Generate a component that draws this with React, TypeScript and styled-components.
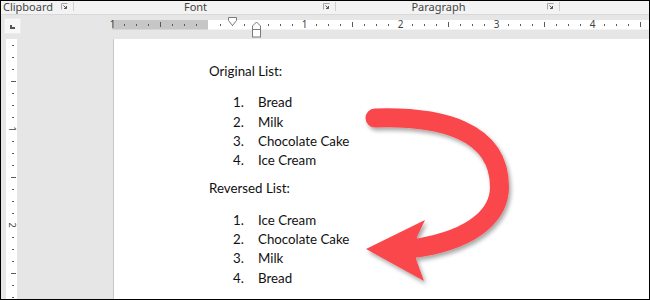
import React from 'react';
import styled, { createGlobalStyle } from 'styled-components';

const TICK = 12;

const originalList = ['Bread', 'Milk', 'Chocolate Cake', 'Ice Cream'];
const reversedList = [...originalList].reverse();

const ribbonGroups = [
	{ label: 'Clipboard', width: 73 },
	{ label: 'Font', width: 262 },
	{ label: 'Paragraph', width: 224 },
];

type Mark = React.ReactElement;

function LauncherIcon() {
	return (
		<svg width="7" height="7" viewBox="0 0 7 7">
			<path d="M0.5 6.5 V0.5 H6.5" fill="none" stroke="#a6a6a6" strokeWidth="1" />
			<path d="M2.5 2.5 L5.5 5.5 M5.5 3 V5.5 H3" fill="none" stroke="#555" strokeWidth="1" />
		</svg>
	);
}

// horizontal ruler, drawn in page coordinates shifted by the svg's left edge (110) and top (15)
function HorizontalRuler() {
	const marginX = 208;
	const marks: Mark[] = [];
	for (let k = -8; k <= 36; k++) {
		const x = marginX + k * TICK - 110;
		if (x < 0 || x > 539 || k === 0) continue;
		if (k % 8 === 0) {
			marks.push(
				<RulerNumber key={k} x={x + 0.5} y={13.3} textAnchor="middle">
					{Math.abs(k / 8)}
				</RulerNumber>,
			);
		} else if (Math.abs(k % 8) === 4) {
			marks.push(<rect key={k} x={x} y={7} width={1} height={5} fill="#5a5a5a" />);
		} else {
			marks.push(<rect key={k} x={x} y={9} width={1} height={2} fill="#5a5a5a" />);
		}
	}
	return (
		<HRulerSvg width="539" height="24" viewBox="0 0 539 24">
			<rect x={2} y={5} width={96} height={9.5} fill="#c6c6c6" />
			<rect x={98} y={5} width={441} height={9.5} fill="#ffffff" />
			{marks}
			<path
				d="M118.5 2.5 H126.5 V5.5 L122.5 10.5 L118.5 5.5 Z"
				fill="#fff"
				stroke="#7a7a7a"
				strokeWidth="1"
			/>
			<path
				d="M142.5 14.5 V11 L146.5 7 L150.5 11 V14.5 Z"
				fill="#fff"
				stroke="#7a7a7a"
				strokeWidth="1"
			/>
			<rect x={142.5} y={14.5} width={8} height={7.5} fill="#fff" stroke="#7a7a7a" strokeWidth="1" />
		</HRulerSvg>
	);
}

// vertical ruler: svg x = page x - 6, svg y = page y - 39
function VerticalRuler() {
	const marks: Mark[] = [];
	for (let k = 1; k <= 22; k++) {
		const y = 33 + k * TICK - 39;
		if (k % 8 === 0) {
			marks.push(
				<VRulerNumber
					key={k}
					x={0}
					y={0}
					textAnchor="middle"
					transform={`translate(6.5 ${y}) rotate(90) translate(0 3.2)`}
				>
					{k / 8}
				</VRulerNumber>,
			);
		} else if (k % 8 === 4) {
			marks.push(<rect key={k} x={5} y={y} width={5} height={1} fill="#5a5a5a" />);
		} else {
			marks.push(<rect key={k} x={6} y={y} width={2} height={1} fill="#5a5a5a" />);
		}
	}
	return (
		<VRulerSvg width="11" height="260" viewBox="0 0 11 260">
			{marks}
		</VRulerSvg>
	);
}

// arrow drawn in screen coordinates through the viewBox
function ReverseArrow() {
	return (
		<ArrowSvg viewBox="114 39 535 260" width="535" height="260">
			<defs>
				<filter id="arrowShadow" x="-20%" y="-20%" width="140%" height="140%">
					<feDropShadow dx="2" dy="3" stdDeviation="2" floodColor="#000" floodOpacity="0.35" />
				</filter>
			</defs>
			<g filter="url(#arrowShadow)" fill="#fa464b">
				<path
					d="M375 118 C440 116, 499.5 130, 499.5 187 C499.5 212, 478 238, 418 248"
					fill="none"
					stroke="#fa464b"
					strokeWidth="19"
					strokeLinecap="round"
				/>
				<path d="M366 249 L425 220 L417 237 L416 259 L424 281 Z" />
			</g>
		</ArrowSvg>
	);
}

function App() {
	return (
		<>
			<GlobalStyle />
			<Frame>
				<RibbonLabels>
					{ribbonGroups.map((g) => (
						<RibbonGroup key={g.label} $width={g.width}>
							<GroupLabel>{g.label}</GroupLabel>
							<Launcher>
								<LauncherIcon />
							</Launcher>
							<GroupSeparator />
						</RibbonGroup>
					))}
				</RibbonLabels>
				<RulerRow>
					<TabSelector>
						<TabMark />
					</TabSelector>
					<HorizontalRuler />
				</RulerRow>
				<Workspace>
					<SideGutter>
						<VRulerStrip>
							<VerticalRuler />
						</VRulerStrip>
					</SideGutter>
					<Page>
						<Heading $after={12}>Original List:</Heading>
						<NumberedList $after={9}>
							{originalList.map((item, i) => (
								<ListItem key={item}>
									<ItemNumber>{i + 1}.</ItemNumber>
									<span>{item}</span>
								</ListItem>
							))}
						</NumberedList>
						<Heading $after={12}>Reversed List:</Heading>
						<NumberedList>
							{reversedList.map((item, i) => (
								<ListItem key={item}>
									<ItemNumber>{i + 1}.</ItemNumber>
									<span>{item}</span>
								</ListItem>
							))}
						</NumberedList>
						<ReverseArrow />
					</Page>
				</Workspace>
			</Frame>
		</>
	);
}

export default App;

const GlobalStyle = createGlobalStyle`
	html, body {
		margin: 0;
		padding: 0;
		background: #fff;
	}
	body {
		width: 650px;
		height: 300px;
		overflow: hidden;
	}
`;

const Frame = styled.div`
	box-sizing: border-box;
	display: flex;
	flex-direction: column;
	width: 650px;
	height: 300px;
	border: 1px solid #000;
	background-color: #e6e6e6;
	overflow: hidden;
	font-family: 'Noto Sans', 'DejaVu Sans', sans-serif;
`;

const RibbonLabels = styled.div`
	display: flex;
	align-items: flex-start;
	height: 13px;
	flex-shrink: 0;
	background-color: #f3f3f3;
	border-bottom: 1px solid #d8d8d8;
`;

const RibbonGroup = styled.div<{ $width: number }>`
	display: flex;
	align-items: flex-start;
	width: ${(p) => p.$width}px;
	height: 13px;
	flex-shrink: 0;
`;

const GroupLabel = styled.div`
	flex: 1;
	text-align: center;
	font-size: 11px;
	line-height: 11px;
	color: #444;
	white-space: nowrap;
`;

const Launcher = styled.div`
	display: flex;
	justify-content: center;
	width: 18px;
	padding-top: 2px;
`;

const GroupSeparator = styled.div`
	width: 1px;
	height: 9px;
	margin-top: 1px;
	background-color: #d0d0d0;
`;

const RulerRow = styled.div`
	display: flex;
	align-items: flex-start;
	height: 24px;
	flex-shrink: 0;
`;

const TabSelector = styled.div`
	box-sizing: border-box;
	width: 17px;
	height: 16px;
	margin: 3px 0 0 3px;
	background-color: #f8f8f8;
	border: 1px solid #ececec;
`;

const TabMark = styled.div`
	box-sizing: border-box;
	width: 5px;
	height: 4px;
	margin: 6px 0 0 5px;
	border-left: 2px solid #555;
	border-bottom: 2px solid #555;
`;

const HRulerSvg = styled.svg`
	display: block;
	margin-left: auto;
`;

const RulerNumber = styled.text`
	font-family: 'Noto Sans', 'DejaVu Sans', sans-serif;
	font-size: 10px;
	fill: #444;
`;

const VRulerNumber = styled(RulerNumber)`
	font-size: 9px;
`;

const VRulerSvg = styled.svg`
	display: block;
	overflow: visible;
`;

const Workspace = styled.div`
	display: flex;
	flex: 1;
	min-height: 0;
`;

const SideGutter = styled.div`
	width: 112px;
	flex-shrink: 0;
`;

const VRulerStrip = styled.div`
	width: 11px;
	height: 100%;
	margin-left: 5px;
	background-color: #fff;
`;

const Page = styled.div`
	position: relative;
	flex: 1;
	padding: 23px 0 0 95px;
	background-color: #fff;
	border-left: 1px solid #c8c8c8;
	font-family: Lato, 'Liberation Sans', sans-serif;
	font-size: 13.3px;
	line-height: 19.3px;
	color: #111;
`;

const Heading = styled.div<{ $after?: number }>`
	margin-bottom: ${(p) => p.$after ?? 11}px;
`;

const NumberedList = styled.div<{ $after?: number }>`
	display: flex;
	flex-direction: column;
	padding-left: 24px;
	margin-bottom: ${(p) => p.$after ?? 0}px;
`;

const ListItem = styled.div`
	display: flex;
`;

const ItemNumber = styled.span`
	width: 25px;
	flex-shrink: 0;
`;

const ArrowSvg = styled.svg`
	position: absolute;
	left: 0;
	top: 0;
	pointer-events: none;
`;
